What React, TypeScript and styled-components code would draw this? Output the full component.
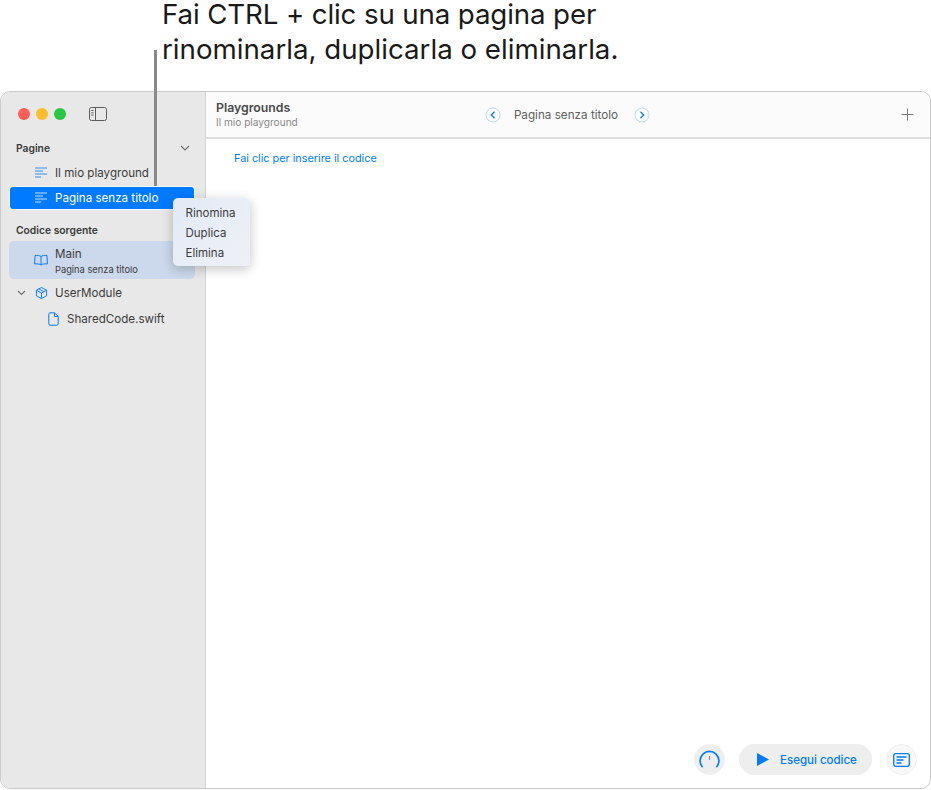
import styled, { createGlobalStyle } from 'styled-components';

const BLUE = '#007aff';

const GlobalStyle = createGlobalStyle`
  html, body {
    margin: 0;
    padding: 0;
    background: #fff;
  }
  body {
    font-family: Inter, "Liberation Sans", sans-serif;
    overflow: hidden;
  }
`;

const Page = styled.div`
  position: relative;
  width: 931px;
  height: 790px;
`;

const Caption = styled.div`
  display: flex;
  flex-direction: column;
  gap: 6px;
  height: 91px;
  padding-left: 162px;
  box-sizing: border-box;
  font-size: 27.7px;
  line-height: 29px;
  color: #1a1a1a;
  white-space: nowrap;
`;

const CaptionLine = styled.span<{ $spacing: number }>`
  letter-spacing: ${p => p.$spacing}px;
`;

const CalloutLine = styled.div`
  position: absolute;
  left: 154px;
  top: 50px;
  width: 2.5px;
  height: 136px;
  background: #8a8a8a;
`;

const Window = styled.div`
  display: flex;
  width: 931px;
  height: 698px;
  box-sizing: border-box;
  border: 1px solid #c9c9c9;
  border-radius: 10px;
  overflow: hidden;
  background: #fff;
`;

const Sidebar = styled.aside`
  width: 205px;
  flex-shrink: 0;
  box-sizing: border-box;
  background: #e8e8e8;
  border-right: 1px solid #d4d4d4;
  padding: 0 9px 0 8px;
`;

const TitleBar = styled.div`
  display: flex;
  align-items: center;
  height: 44px;
  padding-left: 9px;
  gap: 6px;
`;

const Light = styled.span<{ $color: string }>`
  width: 12px;
  height: 12px;
  border-radius: 50%;
  background: ${p => p.$color};
`;

const ToggleIcon = styled.svg`
  margin-left: 17px;
`;

const SectionHeader = styled.div<{ $top: number }>`
  display: flex;
  align-items: center;
  justify-content: space-between;
  height: 16px;
  margin-top: ${p => p.$top}px;
  padding: 0 6px 0 7px;
  font-size: 10.3px;
  font-weight: 600;
  color: #3a3a3a;
`;

const Row = styled.div<{ $active?: boolean; $indent: number; $top: number }>`
  display: flex;
  align-items: center;
  height: 22px;
  margin: ${p => p.$top}px 2px 0 1px;
  padding-left: ${p => p.$indent}px;
  border-radius: 3px;
  font-size: 11.6px;
  color: ${p => (p.$active ? '#fff' : '#3c3c3c')};
  background: ${p => (p.$active ? BLUE : 'transparent')};
  box-shadow: ${p => (p.$active ? '0 0 0 1px #f6f6f6' : 'none')};
`;

const RowIcon = styled.svg<{ $gap: number }>`
  flex-shrink: 0;
  margin-right: ${p => p.$gap}px;
`;

const MainRow = styled.div`
  display: flex;
  align-items: center;
  height: 38px;
  margin: 3px 1px 0 0;
  padding-left: 25px;
  border-radius: 5px;
  background: #ccd8ec;
`;

const MainText = styled.div`
  display: flex;
  flex-direction: column;
  gap: 3px;
  margin-top: 1px;
  color: #3c3c3c;
  font-size: 11.6px;
`;

const SubLabel = styled.span`
  font-size: 9.3px;
`;

const ContextMenu = styled.div`
  position: absolute;
  left: 173px;
  top: 198px;
  width: 77px;
  height: 68px;
  box-sizing: border-box;
  padding: 5px 0 0 12.5px;
  border-radius: 5px;
  background: linear-gradient(135deg, #e3eaf6, #eef0f5);
  box-shadow: 0 3px 12px rgba(0, 0, 0, 0.24);
  font-size: 11.5px;
  line-height: 20px;
  color: #3c3c3c;
`;

const Content = styled.main`
  flex: 1;
  display: flex;
  flex-direction: column;
`;

const Header = styled.header`
  display: grid;
  grid-template-columns: 1fr auto 1fr;
  align-items: center;
  height: 47px;
  box-sizing: border-box;
  padding: 0 16px 0 10px;
  background: #fbfbfb;
  border-bottom: 2px solid #dedede;
`;

const HeaderTitle = styled.div`
  display: flex;
  flex-direction: column;
  gap: 1px;
  margin-top: -1px;
`;

const AppName = styled.span`
  font-size: 12.3px;
  font-weight: 600;
  color: #4a4a4a;
`;

const PlaygroundName = styled.span`
  font-size: 10.1px;
  color: #8a8a8a;
`;

const PageNav = styled.div`
  display: flex;
  align-items: center;
  gap: 13px;
  margin-left: 5px;
  font-size: 11.7px;
  color: #606060;
`;

const PageTitle = styled.span`
  margin-right: 3px;
`;

const PlusIcon = styled.svg`
  justify-self: end;
`;

const Body = styled.div`
  flex: 1;
  padding: 12px 0 0 28px;
  font-size: 10.85px;
  color: ${BLUE};
`;

const Footer = styled.div`
  display: flex;
  justify-content: flex-end;
  align-items: center;
  gap: 14px;
  padding: 0 13px 13px 0;
`;

const RoundButton = styled.div<{ $light?: boolean }>`
  display: flex;
  align-items: center;
  justify-content: center;
  width: 31px;
  height: 31px;
  box-sizing: border-box;
  border-radius: 50%;
  background: ${p => (p.$light ? '#f8f8f8' : '#eeeeee')};
  border: 1px solid ${p => (p.$light ? '#efefef' : '#eeeeee')};
`;

const RunButton = styled.div`
  display: flex;
  align-items: center;
  width: 133px;
  height: 31px;
  box-sizing: border-box;
  padding-left: 18px;
  gap: 11px;
  border-radius: 16px;
  background: #eeeeee;
  color: ${BLUE};
  font-size: 11.5px;
  font-weight: 500;
`;

const PageIcon = ({ color }: { color: string }) => (
  <RowIcon $gap={8} width="12" height="12" viewBox="0 0 12 12" fill="none" stroke={color} strokeWidth="0.8">
    <path d="M0 1h12M0 4h8M0 7h12M0 10h6" />
  </RowIcon>
);

const NavArrow = ({ direction }: { direction: 'left' | 'right' }) => (
  <svg width="16" height="16" viewBox="0 0 16 16" fill="none">
    <circle cx="8" cy="8" r="7" fill="#fff" stroke="#bcd7fb" strokeWidth="1" />
    <path
      d={direction === 'left' ? 'M9.5 4.8 6.3 8l3.2 3.2' : 'M6.5 4.8 9.7 8l-3.2 3.2'}
      stroke={BLUE}
      strokeWidth="1.3"
    />
  </svg>
);

const App = () => {
  return (
    <Page>
      <GlobalStyle />
      <Caption>
        <CaptionLine $spacing={-0.13}>Fai CTRL + clic su una pagina per</CaptionLine>
        <CaptionLine $spacing={0}>rinominarla, duplicarla o eliminarla.</CaptionLine>
      </Caption>
      <Window>
        <Sidebar>
          <TitleBar>
            <Light $color="#ff5f57" />
            <Light $color="#febc2e" />
            <Light $color="#28c840" />
            <ToggleIcon width="18" height="14" viewBox="0 0 18 14" fill="none" stroke="#5c5c5c">
              <rect x="0.5" y="0.5" width="17" height="13" rx="2" />
              <path d="M6.5 .5v13" />
              <path d="M2.2 3.5h2.3M2.2 5.8h2.3M2.2 8.1h2.3" />
            </ToggleIcon>
          </TitleBar>
          <SectionHeader $top={4}>
            Pagine
            <svg width="10" height="6" viewBox="0 0 10 6" fill="none" stroke="#707070" strokeWidth="1.1">
              <path d="M1 1l4 4 4-4" />
            </svg>
          </SectionHeader>
          <Row $indent={25} $top={6}>
            <PageIcon color={BLUE} />
            Il mio playground
          </Row>
          <Row $indent={25} $top={3} $active>
            <PageIcon color="#fff" />
            Pagina senza titolo
          </Row>
          <SectionHeader $top={13}>Codice sorgente</SectionHeader>
          <MainRow>
            <RowIcon $gap={7} width="14" height="12" viewBox="0 0 16 13" fill="none" stroke={BLUE} strokeWidth="1.1">
              <path d="M8 2.6C6.6 1.4 4 1 1.2 1.3L.7 11c2.8-.3 5.4 0 7.3 1.2 1.9-1.2 4.5-1.5 7.3-1.2l-.5-9.7C12 1 9.4 1.4 8 2.6zM8 2.6V12" />
            </RowIcon>
            <MainText>
              Main
              <SubLabel>Pagina senza titolo</SubLabel>
            </MainText>
          </MainRow>
          <Row $indent={7} $top={3}>
            <RowIcon $gap={9} width="9" height="6" viewBox="0 0 9 6" fill="none" stroke="#707070" strokeWidth="1.1">
              <path d="M1 1l3.5 3.5L8 1" />
            </RowIcon>
            <RowIcon $gap={7} width="13" height="14" viewBox="0 0 14 14" fill="none" stroke={BLUE} strokeWidth="1">
              <path d="M7 1l5.5 3v6L7 13l-5.5-3V4zM1.5 4L7 7l5.5-3M7 7v6M4.2 2.6l5.5 3" />
            </RowIcon>
            UserModule
          </Row>
          <Row $indent={38} $top={4}>
            <RowIcon $gap={8} width="11" height="14" viewBox="0 0 11 14" fill="none" stroke={BLUE} strokeWidth="1">
              <path d="M1.8.8h4.7l3.7 3.7v7.2a1.5 1.5 0 0 1-1.5 1.5H1.8A1.5 1.5 0 0 1 .8 11.7V2.3A1.5 1.5 0 0 1 1.8.8zM6.5.8v3.7h3.7" />
            </RowIcon>
            SharedCode.swift
          </Row>
        </Sidebar>
        <Content>
          <Header>
            <HeaderTitle>
              <AppName>Playgrounds</AppName>
              <PlaygroundName>Il mio playground</PlaygroundName>
            </HeaderTitle>
            <PageNav>
              <NavArrow direction="left" />
              <PageTitle>Pagina senza titolo</PageTitle>
              <NavArrow direction="right" />
            </PageNav>
            <PlusIcon width="13" height="13" viewBox="0 0 13 13" stroke="#7a7a7a" strokeWidth="1">
              <path d="M6.5 .5v12M.5 6.5h12" />
            </PlusIcon>
          </Header>
          <Body>Fai clic per inserire il codice</Body>
          <Footer>
            <RoundButton>
              <svg width="21" height="19" viewBox="0 0 21 19" fill="none" stroke={BLUE} strokeWidth="1.6">
                <path d="M3.6 17.2A9.4 9.4 0 1 1 17.4 17.2" />
                <path d="M10.5 6v4" stroke="#8a8a8a" strokeWidth="1" />
              </svg>
            </RoundButton>
            <RunButton>
              <svg width="12" height="13" viewBox="0 0 12 13">
                <path d="M0 0l12 6.5L0 13z" fill={BLUE} />
              </svg>
              Esegui codice
            </RunButton>
            <RoundButton $light>
              <svg width="17" height="14" viewBox="0 0 17 14" fill="none" stroke={BLUE} strokeWidth="1.3">
                <rect x="0.7" y="0.7" width="15.6" height="12.6" rx="2" />
                <path d="M3.5 4h10M3.5 7h7M3.5 10h5" />
              </svg>
            </RoundButton>
          </Footer>
        </Content>
      </Window>
      <CalloutLine />
      <ContextMenu>
        Rinomina
        <br />
        Duplica
        <br />
        Elimina
      </ContextMenu>
    </Page>
  );
};

export default App;
